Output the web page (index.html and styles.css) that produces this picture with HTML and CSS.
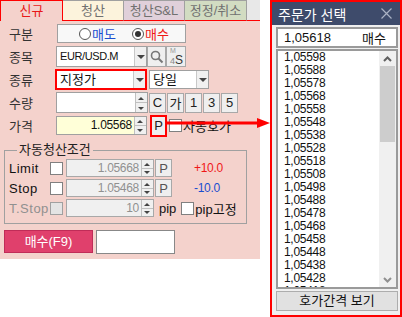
FILE: index.html
```html
<!DOCTYPE html>
<html>
<head lang="ko">
    <meta charset="UTF-8">
    <title>주문</title>
    <link rel="stylesheet" href="styles.css">
</head>
<body>
<div id="screen">
    <div id="order">
        <ul class="tabs">
            <li class="tab on">신규</li>
            <li class="tab t2">청산</li>
            <li class="tab t3">청산S&amp;L</li>
            <li class="tab t4">정정/취소</li>
            <li class="tab-fill"></li>
        </ul>
        <div class="panel">
            <div class="row">
                <span class="lbl">구분</span>
                <div class="side">
                    <span class="radio"></span><span class="sell">매도</span>
                    <span class="radio checked"></span><span class="buy">매수</span>
                </div>
            </div>
            <div class="row">
                <span class="lbl">종목</span>
                <div class="combo sym"><span class="val">EUR/USD.M</span><span class="drop"></span></div>
                <span class="btn icon">
                    <svg width="14" height="14" viewBox="0 0 14 14"><circle cx="5.5" cy="5.5" r="4" fill="none" stroke="#777" stroke-width="1.6"/><line x1="8.5" y1="8.5" x2="12.5" y2="12.5" stroke="#777" stroke-width="2"/></svg>
                </span>
                <span class="btn m4s"><i>M</i><b><em>4</em>S</b></span>
            </div>
            <div class="row">
                <span class="lbl">종류</span>
                <div class="combo kind"><span class="val">지정가</span><span class="drop"></span></div>
                <div class="combo day"><span class="val">당일</span><span class="drop"></span></div>
            </div>
            <div class="row">
                <span class="lbl">수량</span>
                <div class="field qty"><span class="val"></span><span class="spin"><i class="up"></i><i class="dn"></i></span></div>
                <span class="btn key">C</span>
                <span class="btn key">가</span>
                <span class="btn key">1</span>
                <span class="btn key">3</span>
                <span class="btn key">5</span>
            </div>
            <div class="row">
                <span class="lbl">가격</span>
                <div class="field price"><span class="val">1.05568</span><span class="spin"><i class="up"></i><i class="dn"></i></span></div>
                <span class="btn pick">P</span>
                <span class="check"></span><span class="note">자동호가</span>
            </div>

            <fieldset class="auto">
                <legend>자동청산조건</legend>
                <div class="arow">
                    <span class="alb">Limit</span>
                    <span class="check"></span>
                    <div class="field dis"><span class="val">1.05668</span><span class="spin"><i class="up"></i><i class="dn"></i></span></div>
                    <span class="btn small">P</span>
                    <span class="pips plus">+10.0</span>
                </div>
                <div class="arow">
                    <span class="alb">Stop</span>
                    <span class="check"></span>
                    <div class="field dis"><span class="val">1.05468</span><span class="spin"><i class="up"></i><i class="dn"></i></span></div>
                    <span class="btn small">P</span>
                    <span class="pips minus">-10.0</span>
                </div>
                <div class="arow">
                    <span class="alb off">T.Stop</span>
                    <span class="check off"></span>
                    <div class="field dis"><span class="val">10</span><span class="spin"><i class="up"></i><i class="dn"></i></span></div>
                    <span class="unit">pip</span>
                    <span class="check"></span><span class="unit2">pip고정</span>
                </div>
            </fieldset>

            <div class="buyrow">
                <span class="buybtn">매수(F9)</span>
                <span class="memo"></span>
            </div>
        </div>
    </div>

    <div id="popup">
        <div class="title">
            <span>주문가 선택</span>
            <svg width="11" height="11" viewBox="0 0 11 11"><path d="M0.5 0.5 L10.5 10.5 M10.5 0.5 L0.5 10.5" stroke="#aab2c4" stroke-width="1.2"/></svg>
        </div>
        <div class="body">
            <div class="cur"><span>1,05618</span><span>매수</span></div>
            <div class="list">
                <ul class="prices">
                    <li>1,05598</li><li>1,05588</li><li>1,05578</li><li>1,05568</li>
                    <li>1,05558</li><li>1,05548</li><li>1,05538</li><li>1,05528</li>
                    <li>1,05518</li><li>1,05508</li><li>1,05498</li><li>1,05488</li>
                    <li>1,05478</li><li>1,05468</li><li>1,05458</li><li>1,05448</li>
                    <li>1,05438</li><li>1,05428</li><li class="cut">1,05418</li>
                </ul>
                <div class="sbar">
                    <span class="sarrow">
                        <svg width="9" height="6" viewBox="0 0 9 6"><path d="M1 5 L4.5 1.5 L8 5" fill="none" stroke="#606060" stroke-width="2"/></svg>
                    </span>
                    <span class="thumb"></span>
                    <span class="track"></span>
                    <span class="sarrow">
                        <svg width="9" height="6" viewBox="0 0 9 6"><path d="M1 1 L4.5 4.5 L8 1" fill="none" stroke="#909090" stroke-width="2"/></svg>
                    </span>
                </div>
            </div>
            <div class="gap-btn">호가간격 보기</div>
        </div>
    </div>

    <svg class="arrow" width="104" height="12" viewBox="0 0 104 12">
        <line x1="0" y1="6" x2="92" y2="6" stroke="#ff0000" stroke-width="3"/>
        <polygon points="90,1 103,6 90,11" fill="#ff0000"/>
    </svg>
</div>
</body>
</html>
```

FILE: styles.css
```css
*{
    margin: 0;
    padding: 0;
    box-sizing: border-box;
}
ul{
    list-style: none;
}
body{
    background: #fff;
    font-family: "Liberation Sans", "Noto Sans CJK KR", sans-serif;
    font-size: 12px;
    color: #111;
}
#screen{
    width: 402px;
    height: 317px;
    display: flex;
    gap: 10px;
    position: relative;
}
#order{
    width: 260px;
    display: flex;
    flex-direction: column;
}

/* tabs */
.tabs{
    display: flex;
    height: 21px;
}
.tab{
    height: 21px;
    line-height: 19px;
    text-align: center;
    color: #707070;
    font-size: 13px;
    border: 1px solid #a0a0a0;
    border-left: none;
    border-bottom: 1px solid #ff0000;
}
.tab.on{
    width: 63px;
    color: #e81818;
    background: #f4d2cc;
    border: 1px solid #ff0000;
    border-bottom: none;
}
.t2{
    width: 61px;
    background: #fcf3dc;
}
.t3{
    width: 61px;
    background: #e0d0da;
}
.t4{
    width: 62px;
    background: #d2dcc2;
}
.tab-fill{
    flex: 1;
    background: #e8e8e8;
    border-bottom: 1px solid #ff0000;
}

/* main panel */
.panel{
    height: 238px;
    background: #f4d2cc;
    padding-top: 1px;
}
.row{
    height: 23px;
    display: flex;
    align-items: center;
    padding-left: 9px;
}
.lbl{
    width: 47px;
    font-size: 13px;
    color: #333;
}
.side{
    width: 129px;
    height: 19px;
    margin-left: 1px;
    background: #f8f8f8;
    border: 1px solid #a0a0a0;
    display: flex;
    align-items: center;
    padding-left: 21px;
    font-size: 13px;
}
.radio{
    width: 12px;
    height: 12px;
    border: 1px solid #555;
    border-radius: 50%;
    background: #fff;
    margin-right: 1px;
    position: relative;
}
.radio.checked::after{
    content: "";
    position: absolute;
    left: 2px;
    top: 2px;
    width: 6px;
    height: 6px;
    border-radius: 50%;
    background: #333;
}
.sell{
    color: #1a4ed0;
    margin-right: 16px;
}
.buy{
    color: #f01818;
}

/* combos and fields */
.combo{
    display: flex;
    background: #fff;
    border: 1px solid #a0a0a0;
}
.combo .val{
    flex: 1;
    padding-left: 3px;
    line-height: 18px;
    font-size: 13px;
}
.drop{
    width: 12px;
    background: #f0f0f0;
    border-left: 1px solid #c8c8c8;
    position: relative;
}
.drop::after{
    content: "";
    position: absolute;
    left: 2px;
    top: 50%;
    margin-top: -2px;
    border-left: 4px solid transparent;
    border-right: 4px solid transparent;
    border-top: 4px solid #444;
}
.sym{
    width: 91px;
    height: 21px;
}
.sym .val{
    font-size: 11px;
    letter-spacing: -0.4px;
    line-height: 19px;
}
.kind{
    width: 92px;
    height: 21px;
    margin-left: -1px;
    border: 2px solid #ff0000;
}
.kind .val{
    line-height: 17px;
}
.day{
    width: 60px;
    height: 19px;
    margin-left: 2px;
}
.day .val{
    line-height: 17px;
}

.btn{
    display: flex;
    align-items: center;
    justify-content: center;
    background: #efefef;
    border: 1px solid #a8a8a8;
    font-size: 13px;
    color: #222;
}
.icon{
    width: 19px;
    height: 21px;
}
.m4s{
    width: 20px;
    height: 21px;
    flex-direction: column;
    align-items: flex-start;
    padding-left: 3px;
    line-height: 8px;
}
.m4s i{
    font-style: normal;
    font-size: 7px;
    color: #999;
}
.m4s b{
    font-weight: normal;
    font-size: 12px;
    line-height: 11px;
    color: #333;
}
.m4s em{
    font-style: normal;
    color: #888;
    font-size: 9px;
}

.field{
    display: flex;
    background: #fff;
    border: 1px solid #a0a0a0;
}
.field .val{
    flex: 1;
    text-align: right;
    padding-right: 2px;
    font-size: 12px;
    letter-spacing: -0.3px;
}
.spin{
    width: 12px;
    display: flex;
    flex-direction: column;
    border-left: 1px solid #c0c0c0;
    background: #f0f0f0;
}
.spin i{
    flex: 1;
    position: relative;
}
.spin .up{
    border-bottom: 1px solid #c0c0c0;
}
.spin i::after{
    content: "";
    position: absolute;
    left: 2px;
    top: 50%;
    margin-top: -1px;
    border-left: 3px solid transparent;
    border-right: 3px solid transparent;
}
.spin .up::after{
    border-bottom: 3px solid #444;
}
.spin .dn::after{
    border-top: 3px solid #444;
}
.qty{
    width: 92px;
    height: 21px;
}
.key{
    width: 17px;
    height: 20px;
    margin-left: 1px;
}
.key:first-of-type{
    margin-left: 2px;
}
.price{
    width: 91px;
    height: 19px;
    background: #ffffd8;
}
.price .val{
    line-height: 17px;
    background: #ffffd8;
}
.pick{
    width: 17px;
    height: 22px;
    margin-left: 3px;
    border: 2px solid #ff0000;
}
.check{
    width: 13px;
    height: 13px;
    background: #fff;
    border: 1px solid #808080;
    display: inline-block;
}
.row .check{
    margin-left: 2px;
}
.note{
    font-size: 13px;
    margin-left: 1px;
}

/* auto settle group */
.auto{
    width: 243px;
    height: 81px;
    margin: 6px 0 0 4px;
    border: 1px solid #a0a0a0;
    padding: 1px 0 0 4px;
}
.auto legend{
    margin-left: 8px;
    padding: 0 2px;
    font-size: 13px;
    line-height: 14px;
    color: #222;
}
.arow{
    height: 20px;
    display: flex;
    align-items: center;
}
.alb{
    width: 41px;
    font-size: 13px;
    letter-spacing: 0.5px;
}
.alb.off{
    color: #909090;
}
.check.off{
    background: #e4e4e4;
    border-color: #a0a0a0;
}
.arow .field{
    width: 88px;
    height: 18px;
    margin-left: 3px;
    background: #f0f0f0;
    border-color: #a8a8a8;
}
.dis .val{
    color: #909090;
    line-height: 16px;
}
.small{
    width: 17px;
    height: 18px;
    margin-left: 1px;
    color: #555;
}
.pips{
    margin-left: 22px;
    font-size: 12px;
    letter-spacing: -0.3px;
}
.plus{
    color: #f01818;
}
.minus{
    color: #1a4ed0;
}
.unit{
    margin: 0 5px 0 5px;
    font-size: 13px;
}
.unit2{
    margin-left: 1px;
    font-size: 13px;
}

.buyrow{
    display: flex;
    gap: 3px;
    margin: 6px 0 0 4px;
}
.buybtn{
    width: 89px;
    height: 23px;
    background: #e0406c;
    border: 1px solid #c02c58;
    color: #fff;
    font-size: 13px;
    text-align: center;
    line-height: 21px;
}
.memo{
    width: 79px;
    height: 24px;
    background: #fff;
    border: 1px solid #888;
}

/* price popup */
#popup{
    width: 132px;
    height: 317px;
    border: 2px solid #ff0000;
    display: flex;
    flex-direction: column;
    background: #f0f0f0;
}
.title{
    height: 23px;
    background: #3e4b6b;
    color: #fff;
    font-size: 14px;
    display: flex;
    align-items: center;
    justify-content: space-between;
    padding: 0 8px 0 6px;
}
.body{
    flex: 1;
    padding: 2px 2px 0 4px;
    display: flex;
    flex-direction: column;
}
.cur{
    height: 21px;
    background: #fff;
    border: 2px solid #9a9a9a;
    display: flex;
    justify-content: space-between;
    align-items: center;
    padding: 0 10px 0 6px;
    font-size: 13px;
}
.list{
    height: 240px;
    margin-top: 1px;
    background: #fff;
    border: 2px solid #9a9a9a;
    display: flex;
    overflow: hidden;
}
.prices{
    flex: 1;
    padding-left: 6px;
    overflow: hidden;
}
.prices li{
    height: 13px;
    line-height: 13px;
    font-size: 12px;
    letter-spacing: -0.3px;
}
.prices .cut{
    height: 3px;
    overflow: hidden;
}
.sbar{
    width: 17px;
    background: #f0f0f0;
    display: flex;
    flex-direction: column;
}
.sarrow{
    height: 15px;
    display: flex;
    align-items: center;
    justify-content: center;
}
.thumb{
    height: 76px;
    margin: 0 1px;
    background: #cdcdcd;
}
.track{
    flex: 1;
}
.gap-btn{
    height: 20px;
    margin-top: 2px;
    background: #e1e1e1;
    border: 1px solid #adadad;
    text-align: center;
    line-height: 18px;
    font-size: 13px;
}

.arrow{
    position: absolute;
    left: 167px;
    top: 117px;
}
```
